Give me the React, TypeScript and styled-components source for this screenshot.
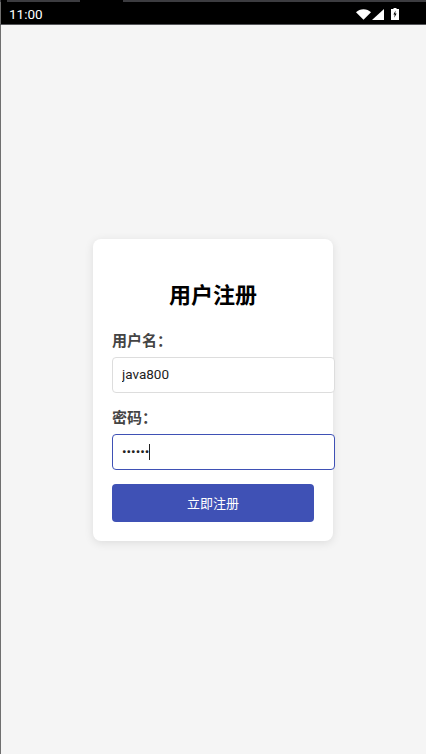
import styled, { createGlobalStyle } from "styled-components";

const GlobalStyle = createGlobalStyle`
  html, body {
    margin: 0;
    padding: 0;
    background: #f5f5f5;
  }
  * {
    font-family: Roboto, "Noto Sans CJK SC", sans-serif;
  }
`;

const Screen = styled.div`
  display: flex;
  flex-direction: column;
  width: 426px;
  height: 754px;
  overflow: hidden;
  background: #f5f5f5;
  box-shadow: inset 1px 0 0 #6f6f6f;
`;

const StatusBar = styled.header`
  position: relative;
  display: flex;
  flex-shrink: 0;
  align-items: center;
  justify-content: space-between;
  height: 25px;
  box-sizing: border-box;
  padding: 2px 27px 0 9px;
  border-top: 2px solid #3c3c40;
  border-bottom: 1px solid #55565a;
  background: #000;
  box-shadow: inset 1px 0 0 #6f6f6f;
  color: #fff;
  font-size: 13.5px;

  &::before {
    content: "";
    position: absolute;
    top: -2px;
    left: 80px;
    width: 43px;
    height: 2px;
    background: #000;
  }

  &::after {
    content: "";
    position: absolute;
    top: -2px;
    left: 1px;
    width: 6px;
    height: 2px;
    background: #000;
  }
`;

const StatusIcons = styled.div`
  display: flex;
  align-items: center;
  gap: 1px;
`;

const BatteryIcon = styled.svg`
  margin-left: 6px;
`;

const Main = styled.main`
  display: flex;
  flex: 1;
  align-items: center;
  justify-content: center;
`;

const Card = styled.form`
  width: 240px;
  height: 302px;
  box-sizing: border-box;
  padding: 45px 19px 20px;
  border-radius: 8px;
  background: #fff;
  box-shadow: 0 2px 10px rgba(0, 0, 0, 0.1);
`;

const Title = styled.h2`
  margin: 0 0 22px;
  color: #000;
  font-size: 22px;
  font-weight: 700;
  line-height: 24px;
  text-align: center;
`;

const Field = styled.div`
  margin-bottom: 14px;
`;

const Label = styled.label`
  display: block;
  margin-bottom: 5px;
  color: #444;
  font-size: 15px;
  font-weight: 700;
  line-height: 22px;
`;

const InputWrap = styled.div`
  position: relative;
  width: 223px;
`;

const Input = styled.input<{ $focused?: boolean }>`
  display: block;
  width: 100%;
  height: 36px;
  box-sizing: border-box;
  padding: 0 9px 1px;
  border: 1px solid ${({ $focused }) => ($focused ? "#3f51b5" : "#ddd")};
  border-radius: 4px;
  outline: none;
  background: #fff;
  color: #222;
  caret-color: transparent;
  font-size: 13.5px;
`;

const Caret = styled.span`
  position: absolute;
  top: 10px;
  left: 37px;
  width: 1px;
  height: 16px;
  background: #222;
`;

const SubmitButton = styled.button`
  display: block;
  width: 202px;
  height: 38px;
  border: none;
  border-radius: 4px;
  background: #3f51b5;
  color: #fff;
  font-size: 13px;
`;

export default function App() {
  return (
    <>
      <GlobalStyle />
      <Screen>
        <StatusBar>
          <span>11:00</span>
          <StatusIcons>
            <svg width="15" height="11" viewBox="0 0 15 11">
              <path d="M0 3.2C2 1.2 4.6 0.2 7.5 0.2S13 1.2 15 3.2L7.5 10.8Z" fill="#fff" />
            </svg>
            <svg width="12" height="11" viewBox="0 0 12 11">
              <path d="M0 11L12 0V11Z" fill="#fff" />
            </svg>
            <BatteryIcon width="8" height="12" viewBox="0 0 8 12">
              <path d="M2.5 0H5.5V1H8V12H0V1H2.5Z" fill="#fff" />
              <path d="M4.6 2.4L2.4 6.6H3.7L3.3 9.8L5.6 5.4H4.2Z" fill="#000" />
            </BatteryIcon>
          </StatusIcons>
        </StatusBar>
        <Main>
          <Card onSubmit={(e) => e.preventDefault()}>
            <Title>用户注册</Title>
            <Field>
              <Label htmlFor="username">用户名：</Label>
              <InputWrap>
                <Input id="username" type="text" defaultValue="java800" />
              </InputWrap>
            </Field>
            <Field>
              <Label htmlFor="password">密码：</Label>
              <InputWrap>
                <Input id="password" type="password" defaultValue="123456" $focused />
                <Caret />
              </InputWrap>
            </Field>
            <SubmitButton type="submit">立即注册</SubmitButton>
          </Card>
        </Main>
      </Screen>
    </>
  );
}
